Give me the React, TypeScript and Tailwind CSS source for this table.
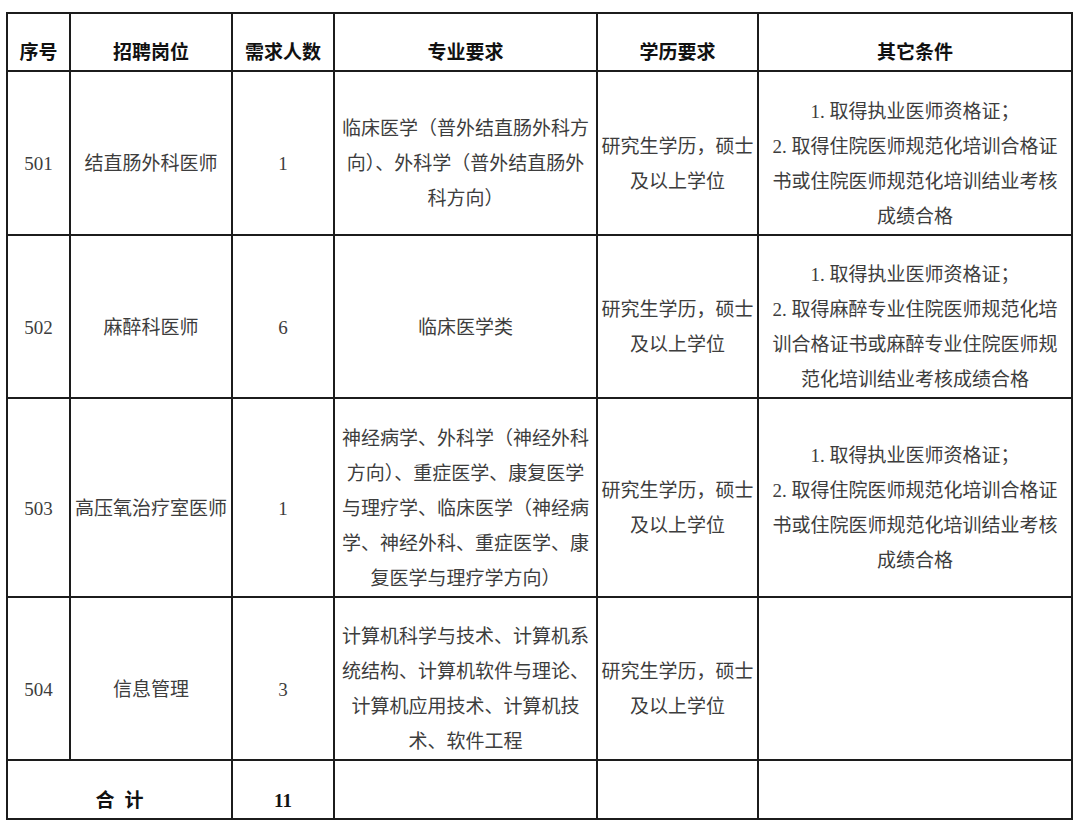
import React from "react";

type Row = {
  no: string;
  post: string;
  count: string;
  major: string[];
  degree: string[];
  other: string[];
};

const degree = ["研究生学历，硕士", "及以上学位"];

const rows: Row[] = [
  {
    no: "501",
    post: "结直肠外科医师",
    count: "1",
    major: ["临床医学（普外结直肠外科方", "向）、外科学（普外结直肠外", "科方向）"],
    degree,
    other: ["1. 取得执业医师资格证；", "2. 取得住院医师规范化培训合格证", "书或住院医师规范化培训结业考核", "成绩合格"],
  },
  {
    no: "502",
    post: "麻醉科医师",
    count: "6",
    major: ["临床医学类"],
    degree,
    other: ["1. 取得执业医师资格证；", "2. 取得麻醉专业住院医师规范化培", "训合格证书或麻醉专业住院医师规", "范化培训结业考核成绩合格"],
  },
  {
    no: "503",
    post: "高压氧治疗室医师",
    count: "1",
    major: [
      "神经病学、外科学（神经外科",
      "方向）、重症医学、康复医学",
      "与理疗学、临床医学（神经病",
      "学、神经外科、重症医学、康",
      "复医学与理疗学方向）",
    ],
    degree,
    other: ["1. 取得执业医师资格证；", "2. 取得住院医师规范化培训合格证", "书或住院医师规范化培训结业考核", "成绩合格"],
  },
  {
    no: "504",
    post: "信息管理",
    count: "3",
    major: ["计算机科学与技术、计算机系", "统结构、计算机软件与理论、", "计算机应用技术、计算机技", "术、软件工程"],
    degree,
    other: [],
  },
];

const heights = ["h-[164px]", "h-[163px]", "h-[199px]", "h-[163px]"];

function Lines({ lines }: { lines: string[] }) {
  return (
    <>
      {lines.map((l) => (
        <div key={l} className="whitespace-pre">
          {l}
        </div>
      ))}
    </>
  );
}

const cell = "border-2 border-[#1c1c1c] p-0 pt-[21px] text-center align-middle";
const head = "border-2 border-[#1c1c1c] p-0 pt-[21px] text-center align-middle font-semibold text-[#111]";

export default function App() {
  return (
    <div className="min-h-[822px] w-[1080px] bg-white pl-[6px] pt-[12px] font-['Liberation_Serif','Noto_Sans_CJK_SC',serif] text-[19px] leading-[35px] text-[#3d3d3d]">
      <table className="w-[1065px] table-fixed border-collapse">
        <colgroup>
          <col className="w-[63px]" />
          <col className="w-[162px]" />
          <col className="w-[102px]" />
          <col className="w-[263px]" />
          <col className="w-[161px]" />
          <col className="w-[314px]" />
        </colgroup>
        <thead>
          <tr className="h-[58px]">
            <th className={head}>序号</th>
            <th className={head}>招聘岗位</th>
            <th className={head}>需求人数</th>
            <th className={head}>专业要求</th>
            <th className={head}>学历要求</th>
            <th className={head}>其它条件</th>
          </tr>
        </thead>
        <tbody>
          {rows.map((r, i) => (
            <tr key={r.no} className={heights[i]}>
              <td className={cell}>{r.no}</td>
              <td className={`${cell} whitespace-nowrap`}>{r.post}</td>
              <td className={cell}>{r.count}</td>
              <td className={cell}>
                <Lines lines={r.major} />
              </td>
              <td className={cell}>
                <Lines lines={r.degree} />
              </td>
              <td className={cell}>
                <Lines lines={r.other} />
              </td>
            </tr>
          ))}
          <tr className="h-[59px]">
            <td colSpan={2} className={head}>
              合<span className="inline-block w-[10px]" />计
            </td>
            <td className={head}>11</td>
            <td className={cell} />
            <td className={cell} />
            <td className={cell} />
          </tr>
        </tbody>
      </table>
    </div>
  );
}
